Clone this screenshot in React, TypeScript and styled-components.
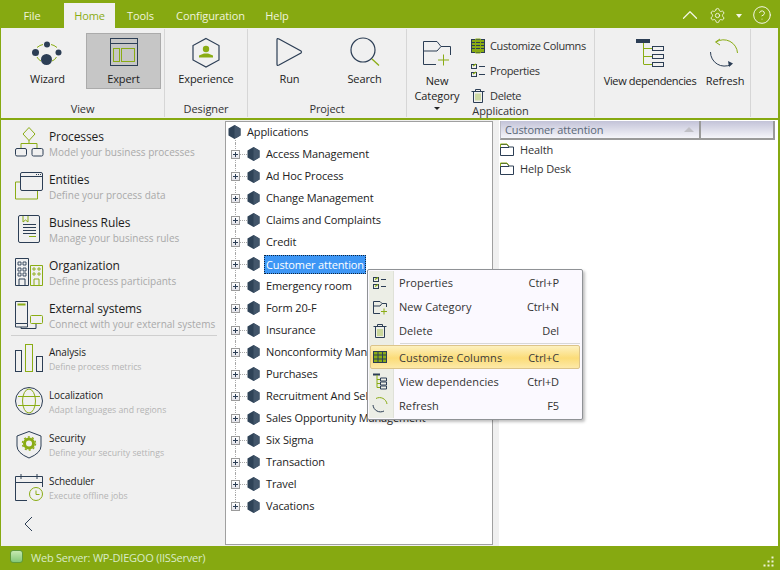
import * as React from "react";
import styled, { createGlobalStyle } from "styled-components";
import { ChevronUp, Settings, CircleHelp } from "lucide-react";

const DARK = "#2c3e55";
const GREEN = "#8aac14";

// ================================================================================
//  Shell
// ================================================================================

const GlobalStyle = createGlobalStyle`
  html, body {
    margin: 0;
    padding: 0;
    width: 780px;
    height: 570px;
    overflow: hidden;
    background: #f0f0f0;
    font-family: "Open Sans", "Noto Sans", "Liberation Sans", sans-serif;
    font-size: 11px;
    letter-spacing: -0.1px;
    color: #222;
  }
  * { box-sizing: border-box; }
`;

const Window = styled.div`
  position: relative;
  width: 780px;
  height: 570px;
  display: flex;
  flex-direction: column;
  background: #f0f0f0;
  border-left: 1px solid #86a911;
  border-right: 2px solid #86a911;
  overflow: hidden;
`;

const TitleBar = styled.div`
  height: 28px;
  margin: 0 -2px 0 -1px;
  background: #86a911;
  display: flex;
  align-items: flex-end;
  flex: none;
`;

const Tab = styled.div<{ $active?: boolean; $w: number }>`
  width: ${(p) => p.$w}px;
  height: ${(p) => (p.$active ? 25 : 28)}px;
  display: flex;
  align-items: center;
  justify-content: center;
  padding-top: ${(p) => (p.$active ? 0 : 2)}px;
  padding-bottom: ${(p) => (p.$active ? 1 : 0)}px;
  background: ${(p) => (p.$active ? "#f0f0f0" : "transparent")};
  color: ${(p) => (p.$active ? "#8aac14" : "#f0f4dc")};
`;

const TitleTools = styled.div`
  margin-left: auto;
  height: 28px;
  display: flex;
  align-items: center;
  color: #f4f7e6;
  padding: 2px 8px 0 0;
`;

const Caret = styled.span`
  width: 0;
  height: 0;
  margin: 2px 10px 0 10px;
  border-left: 3px solid transparent;
  border-right: 3px solid transparent;
  border-top: 4px solid #f4f7e6;
`;

// ================================================================================
//  Ribbon
// ================================================================================

const Ribbon = styled.div`
  height: 92px;
  flex: none;
  display: flex;
  background: #f0f0f0;
  border-bottom: 2px solid #86a911;
`;

const Group = styled.div<{ $w: number }>`
  width: ${(p) => p.$w}px;
  height: 88px;
  margin-top: 1px;
  flex: none;
  display: flex;
  flex-direction: column;
  border-right: 1px solid #d6d6d6;
`;

const GroupBody = styled.div<{ $start?: boolean; $pad?: number }>`
  height: 74px;
  padding: 4px 0 0 ${(p) => p.$pad ?? 0}px;
  display: flex;
  justify-content: ${(p) => (p.$start ? "flex-start" : "center")};
`;

const GroupLabel = styled.div`
  position: relative;
  height: 16px;
  line-height: 16px;
  text-align: center;
  color: #333;
`;

const LargeButton = styled.div<{ $w: number; $active?: boolean; $low?: boolean }>`
  position: relative;
  width: ${(p) => p.$w}px;
  height: 56px;
  flex: none;
  display: flex;
  flex-direction: column;
  align-items: center;
  padding-top: 3px;
  text-align: center;
  line-height: 15px;
  white-space: nowrap;
  background: ${(p) => (p.$active ? "#c6c6c6" : "transparent")};
  border: 1px solid ${(p) => (p.$active ? "#ababab" : "transparent")};

  span {
    margin-top: ${(p) => (p.$low ? 4 : 2)}px;
  }
`;

const TightLabel = styled.span`
  letter-spacing: -0.35px;
`;

const SmallList = styled.div`
  display: flex;
  flex-direction: column;
  flex: none;
  margin-left: 4px;
`;

const SmallButton = styled.div`
  height: 25px;
  flex: none;
  display: flex;
  align-items: center;
  gap: 5px;
  color: #333;
  white-space: nowrap;
  letter-spacing: -0.35px;
`;

const DropArrow = styled.div`
  width: 0;
  height: 0;
  margin-top: 4px;
  border-left: 3px solid transparent;
  border-right: 3px solid transparent;
  border-top: 3px solid #222;
`;

const BigIcon = styled.svg`
  width: 32px;
  height: 32px;
  flex: none;
  fill: none;
  overflow: visible;
`;

const SmallIcon = styled.svg`
  width: 14px;
  height: 16px;
  flex: none;
  fill: none;
  overflow: visible;
`;

// ================================================================================
//  Main area
// ================================================================================

const Main = styled.div`
  flex: 1;
  min-height: 0;
  display: flex;
`;

const Nav = styled.div`
  width: 224px;
  flex: none;
  display: flex;
  flex-direction: column;
  padding: 8px 0 0 12px;
`;

const NavItem = styled.div`
  height: 32px;
  margin-bottom: 11px;
  display: flex;
  gap: 4px;
  white-space: nowrap;
`;

const NavText = styled.div`
  display: flex;
  flex-direction: column;
`;

const NavTitle = styled.div<{ $small?: boolean }>`
  height: ${(p) => (p.$small ? 15 : 16)}px;
  line-height: ${(p) => (p.$small ? 15 : 18)}px;
  font-size: ${(p) => (p.$small ? 10 : 12)}px;
  color: #1c1c1c;
`;

const NavSub = styled.div<{ $small?: boolean }>`
  line-height: ${(p) => (p.$small ? 14 : 16)}px;
  font-size: ${(p) => (p.$small ? 8.7 : 10)}px;
  letter-spacing: 0;
  color: ${(p) => (p.$small ? "#b4b4b4" : "#a9a9a9")};
`;

const NavDivider = styled.div`
  height: 1px;
  width: 206px;
  margin: -8px 0 9px -2px;
  background: #cfcfcf;
`;

const BackArrow = styled.svg`
  width: 12px;
  height: 16px;
  margin: -1px 0 0 10px;
  fill: none;
`;

const TreePanel = styled.div`
  width: 268px;
  margin-top: 1px;
  margin-bottom: 1px;
  flex: none;
  background: #fff;
  border: 1px solid #a0a0a0;
  overflow: hidden;
`;

const TreeRoot = styled.div`
  position: relative;
  height: 20px;
  margin-bottom: 1px;
  padding: 0 0 1px 2px;
  display: flex;
  align-items: center;
  gap: 6px;

  &::after {
    content: "";
    position: absolute;
    left: 9px;
    top: 16px;
    bottom: -1px;
    border-left: 1px dotted #a8a8a8;
  }
`;

const TreeRow = styled.div<{ $last?: boolean }>`
  position: relative;
  height: 22px;
  display: flex;
  align-items: center;
  padding-left: 5px;
  white-space: nowrap;

  /* dotted connector lines of the tree */
  &::before {
    content: "";
    position: absolute;
    left: 9px;
    top: 0;
    bottom: ${(p) => (p.$last ? "11px" : "0")};
    border-left: 1px dotted #a8a8a8;
  }
  &::after {
    content: "";
    position: absolute;
    left: 14px;
    top: 11px;
    width: 7px;
    border-top: 1px dotted #a8a8a8;
  }
`;

const Expander = styled.div`
  position: relative;
  z-index: 1;
  width: 9px;
  height: 9px;
  flex: none;
  background: linear-gradient(#fff, #e3e3ea);
  border: 1px solid #9b9b9b;
  margin-right: 7px;

  &::before {
    content: "";
    position: absolute;
    left: 1px;
    top: 3px;
    width: 5px;
    height: 1px;
    background: #2c3e55;
  }
  &::after {
    content: "";
    position: absolute;
    left: 3px;
    top: 1px;
    width: 1px;
    height: 5px;
    background: #2c3e55;
  }
`;

const HexIcon = styled.svg`
  width: 13px;
  height: 14px;
  flex: none;
`;

const TreeLabel = styled.span<{ $selected?: boolean }>`
  margin-left: ${(p) => (p.$selected ? 4 : 6)}px;
  padding: ${(p) => (p.$selected ? "1px 2px" : "0")};
  line-height: ${(p) => (p.$selected ? 17 : 16)}px;
  letter-spacing: -0.12px;
  color: ${(p) => (p.$selected ? "#fff" : "#222")};
  background: ${(p) => (p.$selected ? "#3d96f5" : "transparent")};
  outline: ${(p) => (p.$selected ? "1px dotted #10253c" : "none")};
  outline-offset: -1px;
`;

const ListPanel = styled.div`
  flex: 1;
  margin-left: 6px;
  background: #fff;
`;

const ListHeader = styled.div`
  height: 19px;
  margin: 1px 0 0 1px;
  width: 275px;
  display: flex;
  gap: 2px;
  background: #9a9a9a;
  border-bottom: 2px solid #9a9a9a;
  border-left: 1px solid #b9b9c4;
  border-right: 2px solid #9a9a9a;
`;

const HeaderCell = styled.div<{ $w: number }>`
  width: ${(p) => p.$w}px;
  position: relative;
  display: flex;
  align-items: center;
  padding: 0 0 1px 4px;
  color: #5a6878;
  background: linear-gradient(#c3c3d8, #f5f5fa);
`;

const SortArrow = styled.div`
  position: absolute;
  right: 5px;
  top: 6px;
  width: 0;
  height: 0;
  border-left: 5px solid transparent;
  border-right: 5px solid transparent;
  border-bottom: 5px solid #c0c0c6;
`;

const ListRow = styled.div`
  height: 19px;
  display: flex;
  align-items: center;
  gap: 6px;
  padding-left: 1px;
  color: #333;
`;

const FolderIcon = styled.svg`
  width: 14px;
  height: 13px;
  flex: none;
  fill: none;
`;

// ================================================================================
//  Context menu
// ================================================================================

const Menu = styled.div`
  position: absolute;
  left: 366px;
  top: 269px;
  width: 216px;
  height: 151px;
  padding: 0 1px;
  background: #fbf9ff;
  border: 1px solid #8f9296;
  border-radius: 2px;
  box-shadow: 2px 2px 3px rgba(0, 0, 0, 0.25);
  color: #333;
  letter-spacing: 0.08px;

  /* the icon gutter */
  &::before {
    content: "";
    position: absolute;
    left: 1px;
    top: 1px;
    bottom: 1px;
    width: 24px;
    background: #eceee6;
    border-right: 1px solid #dfe1d8;
  }
`;

const MenuItem = styled.div<{ $hot?: boolean }>`
  position: relative;
  height: 24px;
  display: flex;
  align-items: center;
  padding: 0 22px 0 3px;
  ${(p) =>
    p.$hot
      ? `
    margin: 0 1px;
    padding: 0 20px 0 1px;
    border: 1px solid #dcc48a;
    border-radius: 2px;
    background: linear-gradient(#fdf1c0, #fbdc78 55%, #fde9a8);
    color: #3a3a3a;
  `
      : ""}
`;

const MenuIcon = styled.svg`
  width: 16px;
  height: 16px;
  flex: none;
  fill: none;
  overflow: visible;
  margin-right: 11px;
`;

const Shortcut = styled.span`
  margin-left: auto;
  letter-spacing: -0.1px;
`;

const MenuSeparator = styled.div`
  position: relative;
  height: 1px;
  margin: 1px 1px 1px 31px;
  background: #d8d8d8;
`;

// ================================================================================
//  Status bar
// ================================================================================

const StatusBar = styled.div`
  position: relative;
  height: 24px;
  flex: none;
  margin: 0 -2px 0 -1px;
  display: flex;
  align-items: center;
  gap: 8px;
  padding: 0 0 2px 10px;
  letter-spacing: -0.22px;
  background: #86a911;
  color: #d9ecc8;
`;

const StatusLed = styled.div`
  width: 13px;
  height: 13px;
  margin-bottom: 1px;
  border-radius: 3px;
  border: 1px solid #5f9a3a;
  background: linear-gradient(#c6e8b0, #84c878);
`;

const Grip = styled.svg`
  position: absolute;
  right: 5px;
  bottom: 2px;
  width: 12px;
  height: 12px;
`;

// ================================================================================
//  Drawings (view boxes use the picture's own coordinates)
// ================================================================================

const Hex = () => (
  <HexIcon viewBox="0 0 13 14">
    <path d="M6.5 0 L12.5 3.5 V10.5 L6.5 14 L0.5 10.5 V3.5Z" fill="#2e4257" />
    <path d="M6.5 0 L12.5 3.5 V10.5 L6.5 14Z" fill="#43566b" />
  </HexIcon>
);

const Folder = () => (
  <FolderIcon viewBox="0 0 14 13">
    <path d="M0.5 12.5V1.5H7L9 4H13.5V12.5Z" stroke={DARK} />
    <path d="M0.5 4.5V1H7L9 3.5" stroke={GREEN} />
    <path d="M0.5 4.5H9" stroke={DARK} />
  </FolderIcon>
);

const tree = [
  "Access Management",
  "Ad Hoc Process",
  "Change Management",
  "Claims and Complaints",
  "Credit",
  "Customer attention",
  "Emergency room",
  "Form 20-F",
  "Insurance",
  "Nonconformity Management",
  "Purchases",
  "Recruitment And Selection",
  "Sales Opportunity Management",
  "Six Sigma",
  "Transaction",
  "Travel",
  "Vacations",
];

// ================================================================================
//  The main component
// ================================================================================

export default function App() {
  return (
    <>
      <GlobalStyle />
      <Window>
        <TitleBar>
          <Tab $w={64}>File</Tab>
          <Tab $w={51} $active>
            Home
          </Tab>
          <Tab $w={51}>Tools</Tab>
          <Tab $w={89}>Configuration</Tab>
          <Tab $w={44}>Help</Tab>
          <TitleTools>
            <ChevronUp size={26} strokeWidth={1.1} />
            <Settings size={17} strokeWidth={1.3} style={{ marginLeft: 6 }} />
            <Caret />
            <CircleHelp size={20} strokeWidth={1.2} />
          </TitleTools>
        </TitleBar>

        <Ribbon>
          <Group $w={164}>
            <GroupBody $pad={5}>
              <LargeButton $w={77}>
                <BigIcon viewBox="32 36 32 32">
                  <circle cx="47" cy="43.5" r="3" fill={DARK} />
                  <circle cx="35.5" cy="51.5" r="3.5" fill={DARK} />
                  <circle cx="58.5" cy="51.5" r="3" fill={DARK} />
                  <circle cx="46.5" cy="58.5" r="5.5" fill={DARK} />
                  <path d="M37 46.5Q40 44 43 43.5M51 43.5Q54 44 57 46.5M37 56Q38.5 59 41 60M52 60Q55 59 56.5 56" stroke={GREEN} />
                </BigIcon>
                <span>Wizard</span>
              </LargeButton>
              <LargeButton $w={75} $active>
                <BigIcon viewBox="107 36 32 32">
                  <rect x="109.5" y="37.5" width="27" height="27" stroke={DARK} />
                  <path d="M110 42.5H136" stroke={DARK} />
                  <rect x="112.5" y="47.5" width="6" height="13" stroke={GREEN} />
                  <rect x="120.5" y="47.5" width="13" height="13" stroke={GREEN} />
                </BigIcon>
                <span>Expert</span>
              </LargeButton>
            </GroupBody>
            <GroupLabel>View</GroupLabel>
          </Group>

          <Group $w={83}>
            <GroupBody>
              <LargeButton $w={75}>
                <BigIcon viewBox="190 36 32 32">
                  <path d="M206 37.5L219 44.5V59L206 66L193 59V44.5Z" stroke={DARK} strokeWidth="1.2" />
                  <circle cx="206" cy="48" r="3.2" fill={GREEN} />
                  <path d="M199 56.5V54.5L204 52.5H208L213 54.5V56.5Z" fill={GREEN} />
                </BigIcon>
                <span>Experience</span>
              </LargeButton>
            </GroupBody>
            <GroupLabel>Designer</GroupLabel>
          </Group>

          <Group $w={159}>
            <GroupBody>
              <LargeButton $w={75}>
                <BigIcon viewBox="274 36 32 32">
                  <path d="M277 38.5Q277 37 279 38L301 50Q302 51 301 52L279 64Q277 65 277 63.5Z" stroke={DARK} strokeWidth="1.2" />
                </BigIcon>
                <span>Run</span>
              </LargeButton>
              <LargeButton $w={75}>
                <BigIcon viewBox="349 36 32 32">
                  <circle cx="363" cy="49" r="12" stroke={DARK} strokeWidth="1.2" />
                  <path d="M372 58L379 64.5" stroke={GREEN} strokeWidth="1.3" />
                </BigIcon>
                <span>Search</span>
              </LargeButton>
            </GroupBody>
            <GroupLabel>Project</GroupLabel>
          </Group>

          <Group $w={188}>
            <GroupBody $start>
              <LargeButton $w={60} $low>
                <BigIcon viewBox="421 36 32 32">
                  <path d="M423.5 63.5V40.5H437L441 45.5H450.5V54M423.5 50H437L441 45.5M423.5 63.5H436" stroke={DARK} />
                  <path d="M438 59H449M443.5 53.5V64.5" stroke={GREEN} />
                </BigIcon>
                <span>
                  New
                  <br />
                  Category
                </span>
                <DropArrow />
              </LargeButton>
              <SmallList>
                <SmallButton>
                  <SmallIcon viewBox="471 37 14 16">
                    <rect x="471.5" y="38.5" width="13" height="13" fill={GREEN} stroke={DARK} />
                    <path d="M471 41.5H485M471 44.5H485M471 47.5H485M475.5 39V51M480.5 39V51" stroke={DARK} />
                    <path d="M475.5 38H480.5V52H475.5Z" stroke={GREEN} />
                  </SmallIcon>
                  Customize Columns
                </SmallButton>
                <SmallButton>
                  <SmallIcon viewBox="471 63 14 16">
                    <rect x="471.5" y="64.5" width="5" height="4" stroke={DARK} />
                    <rect x="471.5" y="72.5" width="5" height="4" stroke={DARK} />
                    <path d="M473 66L476 64M473 74L476 72" stroke={GREEN} strokeWidth="1.4" />
                    <path d="M479 66.5H485M479 74.5H485" stroke={DARK} />
                  </SmallIcon>
                  Properties
                </SmallButton>
                <SmallButton>
                  <SmallIcon viewBox="471 87 14 16">
                    <path d="M471.5 90.5H484.5M475.5 90V88.5H480.5V90" stroke={DARK} />
                    <path d="M473.5 91V101.5H482.5V91" stroke={DARK} />
                    <path d="M475.5 92.5H480.5V99.5H475.5Z" fill={GREEN} opacity="0.7" />
                    <path d="M477 92V100M479 92V100" stroke="#f0f0f0" />
                  </SmallIcon>
                  Delete
                </SmallButton>
              </SmallList>
            </GroupBody>
            <GroupLabel>Application</GroupLabel>
          </Group>

          <Group $w={156}>
            <GroupBody $start>
              <LargeButton $w={110} $low>
                <BigIcon viewBox="634 36 32 32">
                  <rect x="636" y="38" width="14" height="4" fill={DARK} />
                  <path d="M643.5 42V63.5M644 47.5H652M644 55.5H652M644 63.5H652" stroke={GREEN} />
                  <rect x="652.5" y="45.5" width="11" height="4" stroke={DARK} fill="#f0f0f0" />
                  <rect x="652.5" y="53.5" width="11" height="4" stroke={DARK} fill="#f0f0f0" />
                  <rect x="652.5" y="61.5" width="11" height="4" stroke={DARK} fill="#f0f0f0" />
                </BigIcon>
                <TightLabel>View dependencies</TightLabel>
              </LargeButton>
              <LargeButton $w={40} $low>
                <BigIcon viewBox="709 36 32 32">
                  <path d="M716 41 A14 14 0 0 1 737.5 52" stroke={GREEN} />
                  <path d="M720 38L715.5 41L720 44" stroke={GREEN} />
                  <path d="M710.5 51 A14 14 0 0 0 731 63.5" stroke={DARK} />
                  <path d="M728 60L733 62.5L729 66" fill={DARK} />
                </BigIcon>
                <span>Refresh</span>
              </LargeButton>
            </GroupBody>
          </Group>
        </Ribbon>

        <Main>
          <Nav>
            <NavItem>
              <BigIcon viewBox="13 128 32 32">
                <path d="M29 127.5L35 134L29 140.5L23 134Z" stroke={GREEN} />
                <path d="M29 140V143.5M21 148V143.5H37V148" stroke={GREEN} />
                <rect x="15.5" y="148.5" width="11" height="7.5" rx="1.5" stroke={DARK} />
                <rect x="32" y="148.5" width="11" height="7.5" rx="1.5" stroke={DARK} />
              </BigIcon>
              <NavText>
                <NavTitle>Processes</NavTitle>
                <NavSub>Model your business processes</NavSub>
              </NavText>
            </NavItem>
            <NavItem>
              <BigIcon viewBox="13 171 32 32">
                <rect x="20.5" y="172.5" width="22" height="18" rx="1.5" stroke={DARK} />
                <path d="M21 176.5H42" stroke={DARK} />
                <path d="M36 174.5H41" stroke={DARK} strokeDasharray="1 1" />
                <path d="M20 182H15.5V199H37.5V191" stroke={GREEN} />
              </BigIcon>
              <NavText>
                <NavTitle>Entities</NavTitle>
                <NavSub>Define your process data</NavSub>
              </NavText>
            </NavItem>
            <NavItem>
              <BigIcon viewBox="13 214 32 32">
                <rect x="18.5" y="215.5" width="21" height="27" rx="1.5" stroke={DARK} />
                <path d="M23 216V222L25.5 220L28 222V216" stroke={GREEN} />
                <path d="M23 224.5H36M23 227.5H36M23 230.5H36M23 233.5H36" stroke={DARK} />
                <path d="M29 236.5H36" stroke={GREEN} />
              </BigIcon>
              <NavText>
                <NavTitle>Business Rules</NavTitle>
                <NavSub>Manage your business rules</NavSub>
              </NavText>
            </NavItem>
            <NavItem>
              <BigIcon viewBox="13 257 32 32">
                <path d="M15.5 285.5V258.5H28.5V285.5ZM19 285V279H25V285" stroke={DARK} />
                <path d="M18 262h3v3h-3zM23 262h3v3h-3zM18 268h3v3h-3zM23 268h3v3h-3zM18 273h3v3h-3zM23 273h3v3h-3z" stroke={DARK} strokeWidth="0.9" />
                <path d="M30.5 285.5V265.5H42.5V285.5ZM34 285V279H39V285" stroke={GREEN} />
                <path d="M33 268h2v2h-2zM38 268h2v2h-2zM33 273h2v2h-2zM38 273h2v2h-2z" stroke={GREEN} strokeWidth="0.9" />
              </BigIcon>
              <NavText>
                <NavTitle>Organization</NavTitle>
                <NavSub>Define process participants</NavSub>
              </NavText>
            </NavItem>
            <NavItem>
              <BigIcon viewBox="13 300 32 32">
                <path d="M15.5 323.5V301.5H27.5V323.5" stroke={DARK} />
                <path d="M17.5 304.5H25.5" stroke={GREEN} strokeWidth="2" />
                <path d="M15.5 323.5H27.5V327H15.5Z" stroke={DARK} />
                <path d="M21 327V328.5H36V324" stroke={DARK} />
                <rect x="30.5" y="315.5" width="12" height="8" rx="1" stroke={GREEN} />
              </BigIcon>
              <NavText>
                <NavTitle>External systems</NavTitle>
                <NavSub>Connect with your external systems</NavSub>
              </NavText>
            </NavItem>
            <NavDivider />
            <NavItem>
              <BigIcon viewBox="13 345 32 32">
                <rect x="15.5" y="350.5" width="6" height="21" stroke={DARK} />
                <rect x="25.5" y="344.5" width="7" height="27" stroke={GREEN} />
                <rect x="36.5" y="356.5" width="6" height="15" stroke={DARK} />
              </BigIcon>
              <NavText>
                <NavTitle $small>Analysis</NavTitle>
                <NavSub $small>Define process metrics</NavSub>
              </NavText>
            </NavItem>
            <NavItem>
              <BigIcon viewBox="13 388 32 32">
                <circle cx="29" cy="401" r="13.5" stroke={DARK} />
                <ellipse cx="29" cy="401" rx="6.5" ry="12" stroke={GREEN} />
                <path d="M18 396.5H40M18 405.5H40" stroke={GREEN} />
              </BigIcon>
              <NavText>
                <NavTitle $small>Localization</NavTitle>
                <NavSub $small>Adapt languages and regions</NavSub>
              </NavText>
            </NavItem>
            <NavItem>
              <BigIcon viewBox="13 431 32 32">
                <path d="M29 431.5L41 436V446Q41 453 29 458Q17 453 17 446V436Z" stroke={DARK} />
                <circle cx="29" cy="443.5" r="4.5" stroke={GREEN} strokeWidth="3" />
                <circle cx="29" cy="443.5" r="6.5" stroke={GREEN} strokeWidth="1.5" strokeDasharray="2 2.1" />
              </BigIcon>
              <NavText>
                <NavTitle $small>Security</NavTitle>
                <NavSub $small>Define your security settings</NavSub>
              </NavText>
            </NavItem>
            <NavItem>
              <BigIcon viewBox="13 474 32 32">
                <path d="M27 500.5H15.5V476.5H42.5V487M15.5 482.5H42.5M21 474V479M37 474V479" stroke={DARK} />
                <circle cx="36" cy="494" r="6.5" stroke={GREEN} />
                <path d="M36 490.5V494.5H39.5" stroke={GREEN} />
              </BigIcon>
              <NavText>
                <NavTitle $small>Scheduler</NavTitle>
                <NavSub $small>Execute offline jobs</NavSub>
              </NavText>
            </NavItem>
            <BackArrow viewBox="0 0 12 16">
              <path d="M9 1L2 8L9 15" stroke={DARK} />
            </BackArrow>
          </Nav>

          <TreePanel>
            <TreeRoot>
              <Hex />
              Applications
            </TreeRoot>
            {tree.map((name, i) => (
              <TreeRow key={name} $last={i === tree.length - 1}>
                <Expander />
                <Hex />
                <TreeLabel $selected={name === "Customer attention"}>{name}</TreeLabel>
              </TreeRow>
            ))}
          </TreePanel>

          <ListPanel>
            <ListHeader>
              <HeaderCell $w={198}>
                Customer attention
                <SortArrow />
              </HeaderCell>
              <HeaderCell $w={72} />
            </ListHeader>
            <ListRow>
              <Folder />
              Health
            </ListRow>
            <ListRow>
              <Folder />
              Help Desk
            </ListRow>
          </ListPanel>
        </Main>

        <StatusBar>
          <StatusLed />
          Web Server: WP-DIEGOO (IISServer)
          <Grip viewBox="0 0 12 12">
            <path d="M8.5 0.5h2v2h-2zM4.5 4.5h2v2h-2zM8.5 4.5h2v2h-2zM0.5 8.5h2v2h-2zM4.5 8.5h2v2h-2zM8.5 8.5h2v2h-2z" fill="#eef3d8" />
          </Grip>
        </StatusBar>

        <Menu>
          <MenuItem>
            <MenuIcon viewBox="372 274 16 16">
              <rect x="373.5" y="277.5" width="5" height="4" stroke={DARK} />
              <rect x="373.5" y="284.5" width="5" height="4" stroke={DARK} />
              <path d="M375 279.5L378 277.5M375 286.5L378 284.5" stroke={GREEN} strokeWidth="1.3" />
              <path d="M381 279.5H386M381 286.5H386" stroke={DARK} />
            </MenuIcon>
            Properties
            <Shortcut>Ctrl+P</Shortcut>
          </MenuItem>
          <MenuItem>
            <MenuIcon viewBox="372 298 16 16">
              <path d="M373.5 313.5V301.5H380L382 303.5H386.5V307M373.5 306H380L382 303.5M373.5 313.5H380" stroke={DARK} />
              <path d="M381 311.5H387M384 308.5V314.5" stroke={GREEN} />
            </MenuIcon>
            New Category
            <Shortcut>Ctrl+N</Shortcut>
          </MenuItem>
          <MenuItem>
            <MenuIcon viewBox="372 322 16 16">
              <path d="M373.5 326.5H386.5M377.5 326V324.5H382.5V326M375.5 327V337.5H384.5V327" stroke={DARK} />
              <path d="M377.5 329H382.5V336H377.5Z" fill={GREEN} opacity="0.7" />
              <path d="M379 329V336M381 329V336" stroke="#eceee6" />
            </MenuIcon>
            Delete
            <Shortcut>Del</Shortcut>
          </MenuItem>
          <MenuSeparator />
          <MenuItem $hot>
            <MenuIcon viewBox="372 350 16 16">
              <rect x="373.5" y="352.5" width="13" height="11" fill={GREEN} stroke={DARK} />
              <path d="M373 356H387M373 360H387M378 353V363M382.5 353V363" stroke={DARK} />
            </MenuIcon>
            Customize Columns
            <Shortcut>Ctrl+C</Shortcut>
          </MenuItem>
          <MenuItem>
            <MenuIcon viewBox="372 374 16 16">
              <path d="M373 375.5H380" stroke={DARK} strokeWidth="2" />
              <path d="M377 376V388.5H380M377 380.5H380M377 384.5H380" stroke={GREEN} />
              <path d="M380.5 379h6v3h-6zM380.5 383h6v3h-6zM380.5 387h6v3h-6z" stroke={DARK} />
            </MenuIcon>
            View dependencies
            <Shortcut>Ctrl+D</Shortcut>
          </MenuItem>
          <MenuItem>
            <MenuIcon viewBox="372 398 16 16">
              <path d="M376 399.5A7.5 7.5 0 0 1 387 405" stroke={GREEN} />
              <path d="M373 406A7.5 7.5 0 0 0 384 412" stroke={DARK} />
            </MenuIcon>
            Refresh
            <Shortcut>F5</Shortcut>
          </MenuItem>
        </Menu>
      </Window>
    </>
  );
}
